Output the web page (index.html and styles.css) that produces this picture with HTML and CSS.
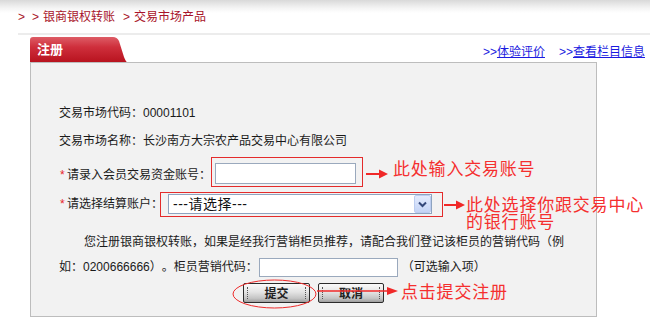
FILE: index.html
```html
<!DOCTYPE html>
<html lang="zh-CN">
<head>
    <meta charset="UTF-8">
    <meta name="viewport" content="width=device-width, initial-scale=1.0">
    <title>注册 - 交易市场产品</title>
    <link rel="stylesheet" href="styles.css">
</head>
<body>

<div class="top">
    <div class="crumb">
        <span class="sep">&gt;</span><span class="sep sep-2">&gt;</span>银商银权转账<span class="sep sep-3">&gt;</span>交易市场产品
    </div>
</div>
<div class="rule"></div>

<div class="panel-head">
    <div class="tab">注册</div>
    <div class="links">
        <span class="link">&gt;&gt;<a href="#">体验评价</a></span>
        <span class="link">&gt;&gt;<a href="#">查看栏目信息</a></span>
    </div>
</div>

<form class="panel" id="regForm">
    <div class="row">交易市场代码：<span class="num">00001101</span></div>
    <div class="row">交易市场名称：长沙南方大宗农产品交易中心有限公司</div>

    <!-- 资金账号 -->
    <div class="field field-acct">
        <label for="acct"><span class="star">*</span>请录入会员交易资金账号：</label>
        <span class="mark mark-input"><input type="text" id="acct" name="acct" class="txt txt-acct"></span>
        <span class="note">
            <svg class="arrow" width="22" height="10" viewBox="0 0 22 10"><line x1="0" y1="5" x2="14" y2="5" stroke="#f02828" stroke-width="2"/><polygon points="13,0.5 22,5 13,9.5" fill="#f02828"/></svg>
            <span class="note-text">此处输入交易账号</span>
        </span>
    </div>

    <!-- 结算账户 -->
    <div class="field field-bank">
        <label for="bank"><span class="star">*</span>请选择结算账户：</label>
        <span class="mark mark-select">
            <span class="select-wrap">
                <select id="bank" name="bank" class="sel">
                    <option value="">---请选择---</option>
                </select>
                <span class="sel-btn"><svg width="15" height="16" viewBox="0 0 15 16"><path d="M4 6.5 L7.5 10 L11 6.5" fill="none" stroke="#34487a" stroke-width="2"/></svg></span>
            </span>
        </span>
        <span class="note">
            <svg class="arrow" width="21" height="10" viewBox="0 0 21 10"><line x1="0" y1="5" x2="13" y2="5" stroke="#f02828" stroke-width="2"/><polygon points="12,0.5 21,5 12,9.5" fill="#f02828"/></svg>
            <span class="note-text">此处选择你跟交易中心<br>的银行账号</span>
        </span>
    </div>

    <div class="intro">
        <div class="intro-line first">您注册银商银权转账，如果是经我行营销柜员推荐，请配合我们登记该柜员的营销代码（例</div>
        <div class="intro-line">如：<span class="num">0200666666</span>）。柜员营销代码：<input type="text" id="staff" name="staff" class="txt txt-staff"><span class="opt">（可选输入项）</span></div>
    </div>

    <div class="btns">
        <button type="submit" class="btn btn-ok">提交</button>
        <button type="reset" class="btn btn-no">取消</button>

        <svg class="ring" width="85" height="30" viewBox="0 0 85 30"><ellipse cx="42.5" cy="15" rx="41.5" ry="14" fill="none" stroke="#ee2a2a" stroke-width="1"/></svg>
        <svg class="line-arrow" width="81" height="10" viewBox="0 0 81 10"><line x1="0" y1="5" x2="73" y2="5" stroke="#f02828" stroke-width="1.5"/><polygon points="70,1 81,5 70,9" fill="#f02828"/></svg>
        <span class="note-text btn-note">点击提交注册</span>
    </div>
</form>

</body>
</html>
```

FILE: styles.css
```css
body {
    margin: 0;
    font-family: "Liberation Sans", "Noto Sans CJK SC", sans-serif;
    font-size: 12px;
    color: #1a1a1a;
    background: #fff;
    text-spacing-trim: space-all;
}
.top {
    height: 33px;
    background: linear-gradient(#d9d9d9 0, #f4f4f4 8px, #fff 13px);
}
.crumb {
    padding: 7px 0 0 18px;
    line-height: 20px;
    color: #a8142a;
}
.sep {
    display: inline-block;
    width: 14px;
}
.sep-2 {
    width: 11px;
}
.sep-3 {
    margin-left: 8px;
    width: 11px;
}
.rule {
    margin-left: 18px;
    height: 2px;
    background: #ececec;
}
.panel-head {
    display: flex;
    justify-content: space-between;
    align-items: center;
    margin: 2px 5px 0 30px;
    height: 25px;
}
.tab {
    width: 97px;
    height: 25px;
    padding-left: 7px;
    box-sizing: border-box;
    line-height: 25px;
    font-size: 13px;
    font-weight: bold;
    color: #fff;
    background: linear-gradient(#de5c66 0, #cf2f3c 40%, #b8131f 100%);
    clip-path: path('M0 25 L0 3 Q0 0 3 0 L83 0 Q87 0 89 4 L94 20 Q96 25 97 25 Z');
}
.links {
    display: flex;
    gap: 14px;
    padding-top: 1px;
    color: #1b1be0;
}
.links a {
    color: #1b1be0;
    text-decoration: underline;
}
.panel {
    margin: 0 0 0 30px;
    width: 567px;
    box-sizing: border-box;
    padding: 36px 28px 13px;
    border: 1px solid #bdbdbd;
    background: #f2f2f2;
}
.row {
    line-height: 28px;
    height: 28px;
    white-space: nowrap;
}
.num {
    font-family: "Liberation Sans", sans-serif;
}
.star {
    color: #e8232a;
    display: inline-block;
    width: 7px;
}
.field {
    display: flex;
    align-items: flex-start;
}
.field > * {
    flex-shrink: 0;
    white-space: nowrap;
}
.field-acct {
    margin-top: 2px;
    height: 30px;
}
.field-acct label {
    padding-top: 6px;
    line-height: 24px;
    padding-left: 1px;
}
.field-bank {
    margin-top: 5px;
    height: 25px;
}
.field-bank label {
    line-height: 25px;
    padding-left: 1px;
}
.mark {
    display: inline-block;
    border: 1px solid #e42b2b;
    box-sizing: border-box;
}
.mark-input {
    padding: 5px 6px 3px 3px;
    height: 30px;
}
.mark-select {
    margin-left: -3px;
    padding: 1px 10px 2px 7px;
    height: 25px;
}
.txt {
    border: 1px solid #9aa9bd;
    background: #fff;
    box-sizing: border-box;
    padding: 0 3px;
    font-size: 12px;
    outline: none;
}
.txt-acct {
    display: block;
    width: 141px;
    height: 21px;
}
.txt-staff {
    width: 139px;
    height: 19px;
    margin-left: 1px;
    vertical-align: middle;
}
.select-wrap {
    position: relative;
    display: block;
}
.sel {
    display: block;
    appearance: none;
    -webkit-appearance: none;
    width: 264px;
    height: 20px;
    border: 1px solid #8ea3c0;
    border-radius: 0;
    background: #fff;
    padding: 0 0 0 4px;
    font-family: "Liberation Sans", "Noto Sans CJK SC", sans-serif;
    font-size: 14px;
    letter-spacing: 0.5px;
    color: #111;
    outline: none;
}
.sel-btn {
    position: absolute;
    right: 1px;
    top: 1px;
    width: 17px;
    height: 18px;
    box-sizing: border-box;
    border: 1px solid #bccdf0;
    border-radius: 2px;
    background: linear-gradient(#e3ebfd, #c4d4f6);
    display: flex;
    align-items: center;
    justify-content: center;
}
.note {
    display: flex;
    align-items: flex-start;
}
.note-text {
    font-family: "Noto Sans CJK SC", sans-serif;
    font-size: 17px;
    letter-spacing: 0.8px;
    color: #f52f2f;
    white-space: nowrap;
}
.field-acct .arrow {
    margin: 12px 0 0 3px;
}
.field-acct .note-text {
    margin: 1px 0 0 5px;
    line-height: 20px;
}
.field-bank .arrow {
    margin: 8px 0 0 1px;
}
.field-bank .note-text {
    margin: 3px 0 0 1px;
    line-height: 17px;
}
.intro {
    margin-top: 13px;
}
.intro-line {
    line-height: 25px;
    height: 25px;
    white-space: nowrap;
}
.intro-line.first {
    padding-left: 25px;
}
.opt {
    margin-left: 4px;
}
.btns {
    position: relative;
    display: flex;
    justify-content: center;
    gap: 8px;
    margin-top: 3px;
    height: 20px;
}
.btn {
    position: relative;
    height: 20px;
    padding: 0;
    border: 1px solid #2b2b2b;
    border-radius: 2px;
    background: linear-gradient(#fafafa 0, #e4e4e4 45%, #c4c4c4 80%, #9e9e9e 100%);
    font-family: "Noto Sans CJK SC", sans-serif;
    font-size: 12px;
    font-weight: bold;
    color: #222;
    line-height: 18px;
    cursor: pointer;
}
.btn::before,
.btn::after {
    content: "";
    position: absolute;
    top: 3px;
    height: 12px;
    border-left: 1px dotted #555;
}
.btn::before {
    left: 3px;
}
.btn::after {
    right: 3px;
}
.btn-ok {
    width: 67px;
}
.btn-no {
    width: 66px;
}
.ring {
    position: absolute;
    left: 173px;
    top: -4px;
}
.line-arrow {
    position: absolute;
    left: 258px;
    top: 3px;
}
.btn-note {
    position: absolute;
    left: 342px;
    top: -2px;
    line-height: 20px;
}
```
